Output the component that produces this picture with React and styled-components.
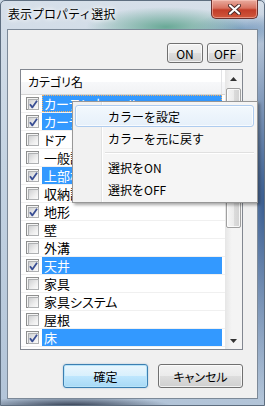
import React from 'react';
import styled, { createGlobalStyle, css } from 'styled-components';

const GlobalStyle = createGlobalStyle`
  html, body {
    margin: 0;
    padding: 0;
    width: 265px;
    height: 406px;
    overflow: hidden;
    background: #c9d6e3;
  }
  * {
    box-sizing: border-box;
  }
`;

const JP = `"Noto Sans CJK JP", "Liberation Sans", sans-serif`;

const Window = styled.div`
  position: relative;
  width: 265px;
  height: 406px;
  display: flex;
  flex-direction: column;
  font-family: ${JP};
  background:
    radial-gradient(ellipse 80px 20px at 165px 26px, rgba(86, 160, 136, 0.85), transparent),
    radial-gradient(ellipse 50px 16px at 240px 28px, rgba(70, 120, 170, 0.6), transparent),
    radial-gradient(ellipse 40px 200px at 264px 200px, rgba(40, 78, 135, 0.9), transparent),
    radial-gradient(ellipse 100px 10px at 70px 405px, rgba(36, 46, 66, 0.9), transparent),
    linear-gradient(to bottom, #d6dfe9 0%, #c4d3e2 40%, #b2c4d8 100%);
  border: 1px solid #5e6e80;
  border-radius: 5px 5px 0 0;
`;

const TitleBar = styled.div`
  height: 28px;
  display: flex;
  align-items: flex-start;
  justify-content: space-between;
`;

const Title = styled.span`
  margin: 5px 0 0 7px;
  font-size: 12px;
  line-height: 16px;
  color: #000;
  text-shadow: 0 0 6px #fff, 0 0 4px #fff;
`;

const CloseButton = styled.div`
  width: 47px;
  height: 19px;
  margin-right: 6px;
  margin-top: -1px;
  display: flex;
  align-items: center;
  justify-content: center;
  border: 1px solid #6b3330;
  border-top: none;
  border-radius: 0 0 5px 5px;
  background: linear-gradient(to bottom, #e9ac9f 0%, #d87260 45%, #c23d28 55%, #d0583c 100%);
  box-shadow: inset 0 0 0 1px rgba(255, 210, 200, 0.5);
`;

const Client = styled.div`
  flex: 1;
  margin: 0 6px 6px 6px;
  border: 1px solid #7c8998;
  background: #f0f0f0;
  display: flex;
  flex-direction: column;
  padding: 13px 14px 10px 12px;
`;

const ToggleRow = styled.div`
  display: flex;
  justify-content: flex-end;
  gap: 4px;
`;

const buttonFace = css`
  border: 1px solid #707070;
  border-radius: 3px;
  background: linear-gradient(to bottom, #f2f2f2 0%, #ebebeb 48%, #dddddd 52%, #cfcfcf 100%);
  box-shadow: inset 0 0 0 1px rgba(255, 255, 255, 0.7);
  font-family: ${JP};
  color: #000;
  display: flex;
  align-items: center;
  justify-content: center;
  font-feature-settings: "palt";
`;

const SmallButton = styled.div`
  ${buttonFace}
  width: 36px;
  height: 20px;
  font-size: 12px;
`;

const DialogButton = styled.div`
  ${buttonFace}
  width: ${(p) => p.$w}px;
  height: 24px;
  font-size: 12px;
  ${(p) =>
    p.$default &&
    css`
      border-color: #3c7fb1;
      background: linear-gradient(to bottom, #eaf6fd 0%, #d9f0fc 48%, #bee6fd 52%, #a7d9f5 100%);
      box-shadow: inset 0 0 0 1px #b8e4fa, 0 0 2px rgba(60, 127, 177, 0.4);
    `}
`;

const ListView = styled.div`
  margin-top: 6px;
  height: 281px;
  border: 1px solid #828790;
  background: #fff;
  display: flex;
`;

const ListMain = styled.div`
  flex: 1;
  display: flex;
  flex-direction: column;
`;

const Header = styled.div`
  height: 25px;
  display: flex;
  border-bottom: 1px solid #d5d5d5;
  background: linear-gradient(to bottom, #ffffff 0%, #ffffff 50%, #f7f8fa 51%, #f1f2f4 100%);
`;

const HeaderCell = styled.div`
  width: 201px;
  padding: 3px 0 0 7px;
  font-size: 12px;
  font-feature-settings: "palt";
  border-right: 1px solid #e3e4e6;
`;

const Row = styled.div`
  height: 18px;
  display: flex;
  align-items: center;
  padding-left: 5px;
  border-bottom: 1px solid #f0f0f0;
`;

const CheckBox = styled.span`
  position: relative;
  width: 13px;
  height: 13px;
  flex: none;
  border: 1px solid #8e8f8f;
  background: #f4f4f4;
  padding: 1px;
  &::before {
    content: '';
    display: block;
    width: 100%;
    height: 100%;
    border: 1px solid #aeb0b2;
    background: linear-gradient(135deg, #cfd0d2 0%, #eeeeee 60%, #fbfbfb 100%);
  }
`;

const Check = styled.svg`
  position: absolute;
  left: 1px;
  top: 1px;
`;

const Label = styled.span`
  margin-left: 3px;
  width: 180px;
  height: 17px;
  padding-left: 2px;
  font-size: 13px;
  line-height: 17px;
  font-feature-settings: "palt";
  white-space: nowrap;
  overflow: hidden;
  color: ${(p) => (p.$selected ? '#fff' : '#000')};
  background: ${(p) => (p.$selected ? '#3399ff' : 'transparent')};
  ${(p) =>
    p.$focused &&
    css`
      outline: 1px dotted #f5b060;
      outline-offset: -1px;
    `}
`;

const ScrollBar = styled.div`
  width: 17px;
  display: flex;
  flex-direction: column;
  background: linear-gradient(to right, #e6e6e6 0%, #f4f4f4 40%, #f4f4f4 100%);
`;

const ArrowButton = styled.div`
  height: 17px;
  display: flex;
  align-items: center;
  justify-content: center;
`;

const Thumb = styled.div`
  margin: 1px 1px 0 1px;
  height: 140px;
  border: 1px solid #a0a0a0;
  border-radius: 2px;
  background: linear-gradient(to right, #f6f6f6 0%, #ececec 50%, #dcdcdc 51%, #d2d2d2 100%);
  box-shadow: inset 0 0 0 1px rgba(255, 255, 255, 0.8);
`;

const Track = styled.div`
  flex: 1;
`;

const ButtonRow = styled.div`
  margin-top: 14px;
  display: flex;
  justify-content: flex-end;
  gap: 10px;
`;

const Menu = styled.div`
  position: absolute;
  left: 71px;
  top: 100px;
  width: 186px;
  padding: 3px 3px 2px 2px;
  border: 1px solid #979797;
  background: linear-gradient(to right, #f1f1f1 0, #f1f1f1 28px, #e2e3e3 28px, #e2e3e3 29px, #fff 29px, #fff 30px, #f5f5f5 30px);
  box-shadow: 2px 2px 3px rgba(0, 0, 0, 0.35);
  font-family: ${JP};
`;

const MenuItem = styled.div`
  height: 22px;
  padding-left: 32px;
  font-size: 12px;
  line-height: 21px;
  color: #000;
  border: 1px solid transparent;
  border-radius: 3px;
  ${(p) =>
    p.$hover &&
    css`
      border-color: #aeccef;
      background: linear-gradient(to bottom, #f2f8fd 0%, #e6f0fa 100%);
      box-shadow: inset 0 0 0 1px rgba(255, 255, 255, 0.7);
    `}
`;

const MenuSeparator = styled.div`
  height: 7px;
  margin-left: 30px;
  display: flex;
  flex-direction: column;
  justify-content: center;
  &::before {
    content: '';
    height: 1px;
    background: #e0e0e0;
    border-bottom: 1px solid #fff;
    box-sizing: content-box;
  }
`;

const rows = [
  { name: 'カーテンウォール', on: true, sel: true, focus: true },
  { name: 'カーテン', on: true, sel: true },
  { name: 'ドア', on: false },
  { name: '一般設備', on: false },
  { name: '上部構造', on: true, sel: true },
  { name: '収納設備', on: false },
  { name: '地形', on: true },
  { name: '壁', on: false },
  { name: '外溝', on: false },
  { name: '天井', on: true, sel: true },
  { name: '家具', on: false },
  { name: '家具システム', on: false },
  { name: '屋根', on: false },
  { name: '床', on: true, sel: true },
];

const CheckMark = () => (
  <Check width="11" height="11" viewBox="0 0 11 11">
    <path d="M2 5.2 L4.3 8.4 L9 1.8" stroke="#3a4f94" strokeWidth="1.8" fill="none" strokeLinejoin="round" />
  </Check>
);

const Arrow = ({ down }) => (
  <svg width="7" height="4" viewBox="0 0 7 4">
    <path d={down ? 'M0 0 H7 L3.5 4 Z' : 'M0 4 H7 L3.5 0 Z'} fill="#333" />
  </svg>
);

const App = () => (
  <>
    <GlobalStyle />
    <Window>
      <TitleBar>
        <Title>表示プロパティ選択</Title>
        <CloseButton>
          <svg width="13" height="11" viewBox="0 0 13 11">
            <path d="M2 1.5 L11 9.5 M11 1.5 L2 9.5" stroke="#4a2a28" strokeWidth="4" strokeLinecap="round" />
            <path d="M2 1.5 L11 9.5 M11 1.5 L2 9.5" stroke="#fff" strokeWidth="2.2" strokeLinecap="round" />
          </svg>
        </CloseButton>
      </TitleBar>
      <Client>
        <ToggleRow>
          <SmallButton>ON</SmallButton>
          <SmallButton>OFF</SmallButton>
        </ToggleRow>
        <ListView>
          <ListMain>
            <Header>
              <HeaderCell>カテゴリ名</HeaderCell>
            </Header>
            {rows.map((r) => (
              <Row key={r.name}>
                <CheckBox>{r.on && <CheckMark />}</CheckBox>
                <Label $selected={r.sel} $focused={r.focus}>
                  {r.name}
                </Label>
              </Row>
            ))}
          </ListMain>
          <ScrollBar>
            <ArrowButton>
              <Arrow />
            </ArrowButton>
            <Thumb />
            <Track />
            <ArrowButton>
              <Arrow down />
            </ArrowButton>
          </ScrollBar>
        </ListView>
        <ButtonRow>
          <DialogButton $w={85} $default>
            確定
          </DialogButton>
          <DialogButton $w={85}>キャンセル</DialogButton>
        </ButtonRow>
      </Client>
      <Menu>
        <MenuItem $hover>カラーを設定</MenuItem>
        <MenuItem>カラーを元に戻す</MenuItem>
        <MenuSeparator />
        <MenuItem>選択をON</MenuItem>
        <MenuItem>選択をOFF</MenuItem>
      </Menu>
    </Window>
  </>
);

export default App;
